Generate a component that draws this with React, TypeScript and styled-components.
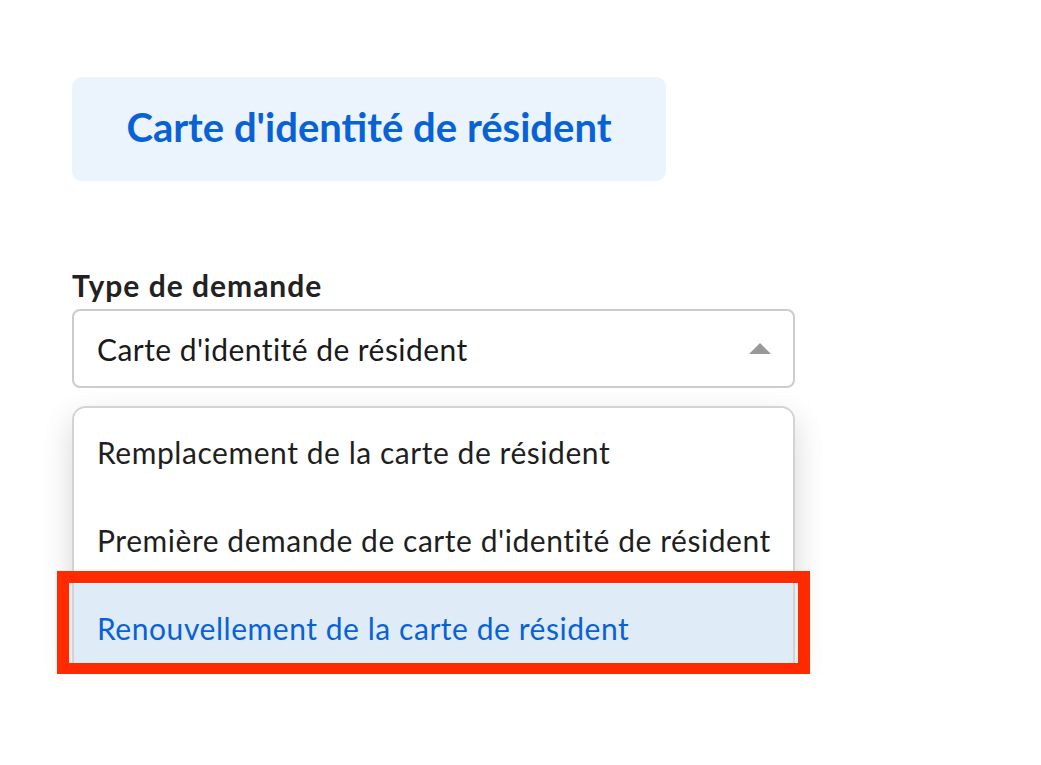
import React from "react";
import styled, { createGlobalStyle } from "styled-components";

const Global = createGlobalStyle`
  html, body { margin: 0; padding: 0; background: #ffffff; }
  body { font-family: "Lato", "Noto Sans", sans-serif; color: #222222; }
  * { box-sizing: border-box; }
`;

const Page = styled.div`
  padding: 77px 0 0 72px;
  display: flex;
  flex-direction: column;
  align-items: flex-start;
`;

const TitleCard = styled.div`
  width: 594px;
  height: 104px;
  border-radius: 10px;
  background: #ebf3fd;
  display: flex;
  align-items: center;
  justify-content: center;
`;

const Title = styled.h1`
  margin: 0;
  font-size: 40px;
  font-weight: 700;
  color: #0862d6;
  letter-spacing: 0;
  transform: translateY(-2px);
`;

const Field = styled.div`
  margin-top: 86px;
  width: 723px;
  display: flex;
  flex-direction: column;
`;

const Label = styled.label`
  font-size: 30px;
  font-weight: 700;
  letter-spacing: 1px;
  color: #222222;
  line-height: 36px;
  margin-bottom: 6px;
`;

const SelectBox = styled.div`
  height: 79px;
  border: 2px solid #cccccc;
  border-radius: 8px;
  padding: 0 22px 0 23px;
  display: flex;
  align-items: center;
  justify-content: space-between;
  font-size: 30px;
  letter-spacing: 0.45px;
  color: #1a1a1a;
`;

const Caret = styled.svg`
  width: 22px;
  height: 11px;
  display: block;
`;

const MenuWrap = styled.div`
  position: relative;
  margin-top: 18px;
`;

const Menu = styled.ul`
  list-style: none;
  margin: 0;
  padding: 0;
  border: 2px solid #d3d3d3;
  border-radius: 14px;
  background: #ffffff;
  overflow: hidden;
  box-shadow: 0 12px 32px rgba(0, 0, 0, 0.16);
`;

const Option = styled.li<{ $active?: boolean }>`
  height: 88px;
  display: flex;
  align-items: center;
  padding-left: 23px;
  font-size: 30px;
  letter-spacing: 0.55px;
  color: ${(p) => (p.$active ? "#0862d6" : "#1f1f1f")};
  background: ${(p) => (p.$active ? "#dfebf7" : "#ffffff")};
`;

const Highlight = styled.div`
  position: absolute;
  left: -15px;
  top: 165px;
  width: 753px;
  height: 104px;
  border: 12px solid #ff2a00;
  pointer-events: none;
`;

export default function App() {
  return (
    <>
      <Global />
      <Page>
        <TitleCard>
          <Title>Carte d'identité de résident</Title>
        </TitleCard>
        <Field>
          <Label>Type de demande</Label>
          <SelectBox>
            <span>Carte d'identité de résident</span>
            <Caret viewBox="0 0 22 11">
              <polygon points="0,11 11,0 22,11" fill="#999999" />
            </Caret>
          </SelectBox>
          <MenuWrap>
            <Menu>
              <Option>Remplacement de la carte de résident</Option>
              <Option>Première demande de carte d'identité de résident</Option>
              <Option $active>Renouvellement de la carte de résident</Option>
            </Menu>
            <Highlight />
          </MenuWrap>
        </Field>
      </Page>
    </>
  );
}
